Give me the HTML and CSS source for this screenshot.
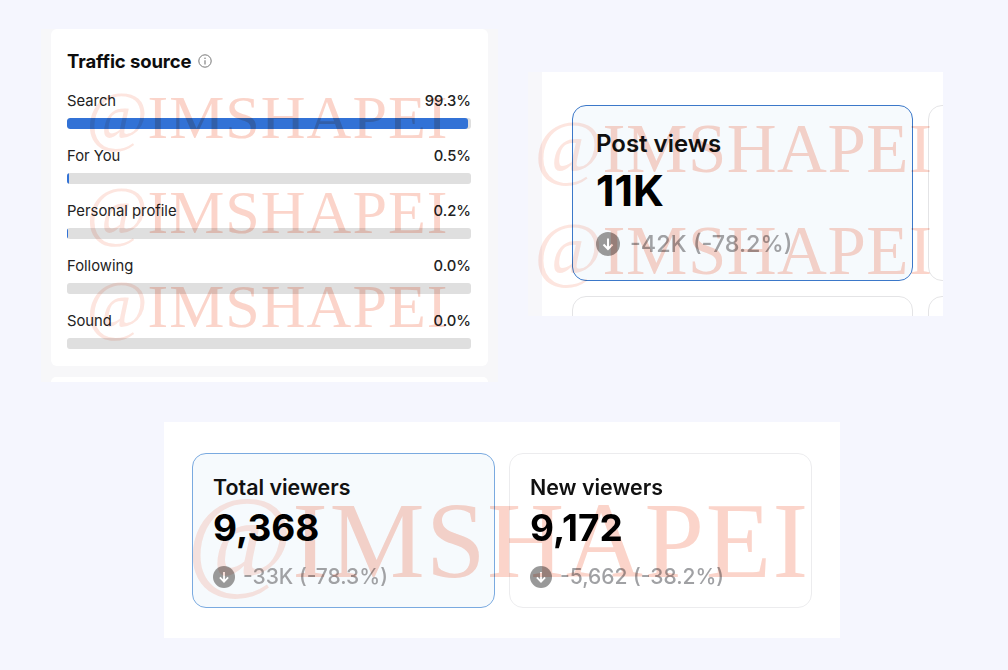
FILE: index.html
```html
<!DOCTYPE html>
<html lang="en">
<head>
<meta charset="utf-8">
<title>Analytics</title>
<link rel="stylesheet" href="styles.css">
</head>
<body>
<div class="canvas">
  <div class="backdrop"></div>
  <section class="panel traffic">
    <h2 class="traffic-title">Traffic source
      <svg class="info" viewBox="0 0 14 14" width="14" height="14" aria-hidden="true"><circle cx="7" cy="7" r="6.2" fill="none" stroke="#777" stroke-width="1"/><path d="M7 6.2V10.4" stroke="#777" stroke-width="1.1" fill="none"/><circle cx="7" cy="4.2" r=".75" fill="#777"/></svg>
    </h2>
    <div class="rows">
      <div class="row"><div class="row-head"><span>Search</span><span class="pct">99.3%</span></div><div class="track"><div class="fill" style="width:99.3%"></div></div></div>
      <div class="row"><div class="row-head"><span>For You</span><span class="pct">0.5%</span></div><div class="track"><div class="fill" style="width:0.5%"></div></div></div>
      <div class="row"><div class="row-head"><span>Personal profile</span><span class="pct">0.2%</span></div><div class="track"><div class="fill" style="width:0.2%"></div></div></div>
      <div class="row"><div class="row-head"><span>Following</span><span class="pct">0.0%</span></div><div class="track"></div></div>
      <div class="row"><div class="row-head"><span>Sound</span><span class="pct">0.0%</span></div><div class="track"></div></div>
    </div>
  </section>
  <div class="panel sliver"></div>

  <section class="panel post">
    <div class="post-grid">
      <div class="card active">
        <div class="card-title">Post views</div>
        <div class="card-value">11K</div>
        <div class="card-delta">
          <svg class="down" viewBox="0 0 24 24" aria-hidden="true"><circle cx="12" cy="12" r="12" fill="#999"/><path d="M12 6.5V16.5M7.5 12.5L12 17L16.5 12.5" fill="none" stroke="#fff" stroke-width="2"/></svg>
          <span>-42K (-78.2%)</span>
        </div>
      </div>
      <div class="card"></div>
      <div class="card"></div>
      <div class="card"></div>
    </div>
  </section>

  <section class="panel viewers">
    <div class="card active">
      <div class="card-title">Total viewers</div>
      <div class="card-value">9,368</div>
      <div class="card-delta">
        <svg class="down" viewBox="0 0 24 24" aria-hidden="true"><circle cx="12" cy="12" r="12" fill="#999"/><path d="M12 6.5V16.5M7.5 12.5L12 17L16.5 12.5" fill="none" stroke="#fff" stroke-width="2"/></svg>
        <span>-33K (-78.3%)</span>
      </div>
    </div>
    <div class="card">
      <div class="card-title">New viewers</div>
      <div class="card-value">9,172</div>
      <div class="card-delta">
        <svg class="down" viewBox="0 0 24 24" aria-hidden="true"><circle cx="12" cy="12" r="12" fill="#999"/><path d="M12 6.5V16.5M7.5 12.5L12 17L16.5 12.5" fill="none" stroke="#fff" stroke-width="2"/></svg>
        <span>-5,662 (-38.2%)</span>
      </div>
    </div>
  </section>

  <div class="mark m1"><i>@</i>IMSHAPEI</div>
  <div class="mark m2"><i>@</i>IMSHAPEI</div>
  <div class="mark m3"><i>@</i>IMSHAPEI</div>
  <div class="mark m4"><i>@</i>IMSHAPEI</div>
  <div class="mark m5"><i>@</i>IMSHAPEI</div>
  <div class="mark m6"><i>@</i>IMSHAPEI</div>
</div>
</body>
</html>
```
FILE: styles.css
```css
* { box-sizing: border-box; }
html, body { margin: 0; padding: 0; }
body { background: #f5f6fe; font-family: Inter, "Liberation Sans", sans-serif; color: #111; overflow: hidden; }
.canvas { position: relative; width: 1008px; height: 670px; overflow: hidden; filter: blur(.35px); }
.backdrop { position: absolute; left: 41px; top: 29px; width: 457px; height: 353px; background: #f7f7f9; }
.panel { position: absolute; background: #fff; overflow: hidden; }

.traffic { left: 51px; top: 29px; width: 437px; height: 337px; border-radius: 6px; padding: 20px 17px 0 16px; }
.sliver { left: 51px; top: 377px; width: 437px; height: 5px; border-radius: 5px 5px 0 0; }
.traffic-title { display: flex; align-items: center; gap: 6px; margin: 0; font-size: 18.5px; line-height: 24px; font-weight: 700; letter-spacing: -.1px; color: #0d0d0d; }
.info { display: block; }
.rows { display: flex; flex-direction: column; gap: 16px; margin-top: 17px; }
.row { display: flex; flex-direction: column; gap: 6px; }
.row-head { display: flex; justify-content: space-between; font-size: 14.8px; line-height: 22px; height: 22px; color: #222; }
.pct { font-weight: 500; }
.track { height: 11px; border-radius: 3px; background: #dfdfdf; overflow: hidden; }
.fill { height: 100%; min-width: 1px; background: #3272d6; border-radius: 3px; }

.post { left: 542px; top: 72px; width: 401px; height: 244px; padding: 33px 0 0 30px; box-shadow: -14px 0 0 #f7f7fa; overflow: hidden; }
.post-grid { display: grid; grid-template-columns: 341px 341px; grid-template-rows: 176px 176px; gap: 15px; }
.viewers { left: 164px; top: 422px; width: 676px; height: 216px; padding: 31px 0 0 28px; display: grid; grid-template-columns: 303px 303px; grid-template-rows: 155px; gap: 14px; }

.card { border: 1px solid #e4e4e6; border-radius: 14px; background: #fff; }
.card.active { border-color: #3b78c9; background: #f6fafd; }
.post .card.active { padding: 23px 23px 0; }
.card-title { font-weight: 600; color: #111; }
.card-value { font-weight: 700; color: #000; }
.post .card-title { font-size: 24px; line-height: 30px; }
.post .card-value { font-size: 43px; line-height: 48px; margin-top: 7px; }
.card-delta { display: flex; align-items: center; color: #a0a1a4; font-weight: 500; }
.post .card-delta { font-size: 23.4px; line-height: 30px; margin-top: 15px; gap: 10px; }
.post .down { width: 24px; height: 24px; }

.viewers .card { padding: 20px 20px 0; border-color: #ececee; }
.viewers .card.active { border: 1.5px solid #7aaae0; }
.viewers .card-title { font-size: 21.4px; line-height: 26px; }
.viewers .card-value { font-size: 37px; line-height: 44px; margin-top: 6px; }
.viewers .card-delta { font-size: 21px; line-height: 26px; margin-top: 14px; gap: 8px; }
.viewers .down { width: 22px; height: 22px; }

.mark { position: absolute; font-family: "Liberation Serif", serif; color: #f8b8a6; opacity: .6; white-space: nowrap; mix-blend-mode: multiply; pointer-events: none; line-height: 1; }
.mark i { font-weight: 400; font-size: 1.08em; line-height: 0; opacity: .6; letter-spacing: 0; }
.m1, .m2, .m3 { left: 86px; font-size: 62px; letter-spacing: 1px; }
.m1 { top: 86px; }
.m2 { top: 181px; }
.m3 { top: 275px; }
.m4, .m5 { left: 534px; font-size: 69px; letter-spacing: .5px; }
.m4 { top: 115px; }
.m5 { top: 217px; }
.m6 { left: 186px; top: 488px; font-size: 107px; letter-spacing: 1.5px; }
```
